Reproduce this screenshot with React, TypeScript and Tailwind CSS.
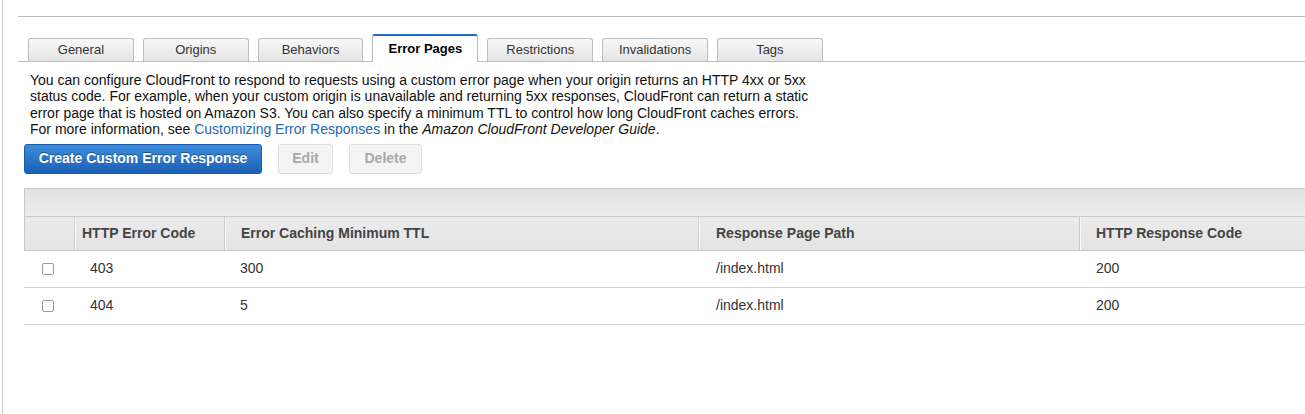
import React from "react";

const tabs = ["General", "Origins", "Behaviors", "Error Pages", "Restrictions", "Invalidations", "Tags"];

const rows = [
  { code: "403", ttl: "300", path: "/index.html", resp: "200" },
  { code: "404", ttl: "5", path: "/index.html", resp: "200" },
];

export default function App() {
  return (
    <div
      className="h-[414px] w-[1305px] overflow-hidden bg-white pl-[2px] text-[#222]"
      style={{ fontFamily: '"Liberation Sans", Arial, Helvetica, sans-serif' }}
    >
      <div className="h-full border-l border-[#c9c9c9] pt-[16px]">
        <div className="ml-[15px] border-t border-[#bdbdbd]" />
        {/* Tabs */}
        <div className="ml-[15px] mt-[17px] flex h-[28px] items-end gap-[9px] border-b border-[#bdbdbd] pl-[10px]">
          {tabs.map((t) =>
            t === "Error Pages" ? (
              <div
                key={t}
                className="-mb-px flex h-[28px] w-[105.83px] items-center justify-center rounded-t-[3px] border-x border-t-2 border-x-[#bdbdbd] border-t-[#1f6fc5] bg-white text-[13px] font-bold text-black"
              >
                {t}
              </div>
            ) : (
              <div
                key={t}
                className="flex h-[23px] w-[105.83px] items-center justify-center rounded-t-[3px] border-x border-t border-[#bdbdbd] bg-gradient-to-b from-[#f8f8f8] to-[#e5e5e5] text-[13px] text-[#333]"
              >
                {t}
              </div>
            )
          )}
        </div>
        {/* Description */}
        <div className="ml-[27px] mt-[10px] text-[14px] leading-[16.4px] text-[#111]">
          You can configure CloudFront to respond to requests using a custom error page when your origin returns an HTTP 4xx or 5xx
          <br />
          status code. For example, when your custom origin is unavailable and returning 5xx responses, CloudFront can return a static
          <br />
          error page that is hosted on Amazon S3. You can also specify a minimum TTL to control how long CloudFront caches errors.
          <br />
          For more information, see <span className="text-[#2468b6]">Customizing Error Responses</span> in the{" "}
          <span className="italic">Amazon CloudFront Developer Guide</span>.
        </div>
        {/* Buttons */}
        <div className="ml-[21px] mt-[6px] flex gap-[16px]">
          <div className="flex h-[30px] w-[238px] items-center justify-center rounded-[3px] border border-[#1a5cab] bg-gradient-to-b from-[#3d8cdb] to-[#1a60b5] text-[14px] font-bold text-white [text-shadow:0_-1px_0_rgba(0,0,0,0.35)]">
            Create Custom Error Response
          </div>
          <div className="flex h-[30px] w-[55px] items-center justify-center rounded-[3px] border border-[#dedede] bg-[#f4f4f4] text-[14px] font-bold text-[#a8a8a8]">
            Edit
          </div>
          <div className="flex h-[30px] w-[73px] items-center justify-center rounded-[3px] border border-[#dedede] bg-[#f4f4f4] text-[14px] font-bold text-[#a8a8a8]">
            Delete
          </div>
        </div>
        {/* Table */}
        <div className="ml-[21px] mt-[14px] w-[1300px]">
          <div className="h-[29px] border-l border-t border-b border-[#c8c8c8] bg-gradient-to-b from-[#e3e3e3] to-[#ececec]" />
          <div className="flex h-[34px] border-l border-b border-[#c8c8c8] bg-gradient-to-b from-[#ebebeb] to-[#e4e4e4] text-[14px] font-bold text-[#444]">
            <div className="w-[49px]" />
            <div className="flex w-[150px] items-center border-l border-[#cacaca] pl-[7px] shadow-[inset_1px_0_0_#fafafa]">HTTP Error Code</div>
            <div className="flex w-[474px] items-center border-l border-[#cacaca] pl-[16px] shadow-[inset_1px_0_0_#fafafa]">Error Caching Minimum TTL</div>
            <div className="flex w-[381px] items-center border-l border-[#cacaca] pl-[17px] shadow-[inset_1px_0_0_#fafafa]">Response Page Path</div>
            <div className="flex flex-1 items-center border-l border-[#cacaca] pl-[16px] shadow-[inset_1px_0_0_#fafafa]">HTTP Response Code</div>
          </div>
          {rows.map((r) => (
            <div key={r.code} className="flex h-[37px] border-b border-[#d3d3d3] text-[14px] text-[#333]">
              <div className="flex w-[50px] items-center justify-center pr-[2px]">
                <div className="h-[12px] w-[12px] rounded-[2px] border border-[#9a9a9a] bg-white" />
              </div>
              <div className="flex w-[150px] items-center pl-[16px]">{r.code}</div>
              <div className="flex w-[474px] items-center pl-[16px]">{r.ttl}</div>
              <div className="flex w-[381px] items-center pl-[18px]">{r.path}</div>
              <div className="flex flex-1 items-center pl-[17px]">{r.resp}</div>
            </div>
          ))}
        </div>
      </div>
    </div>
  );
}
